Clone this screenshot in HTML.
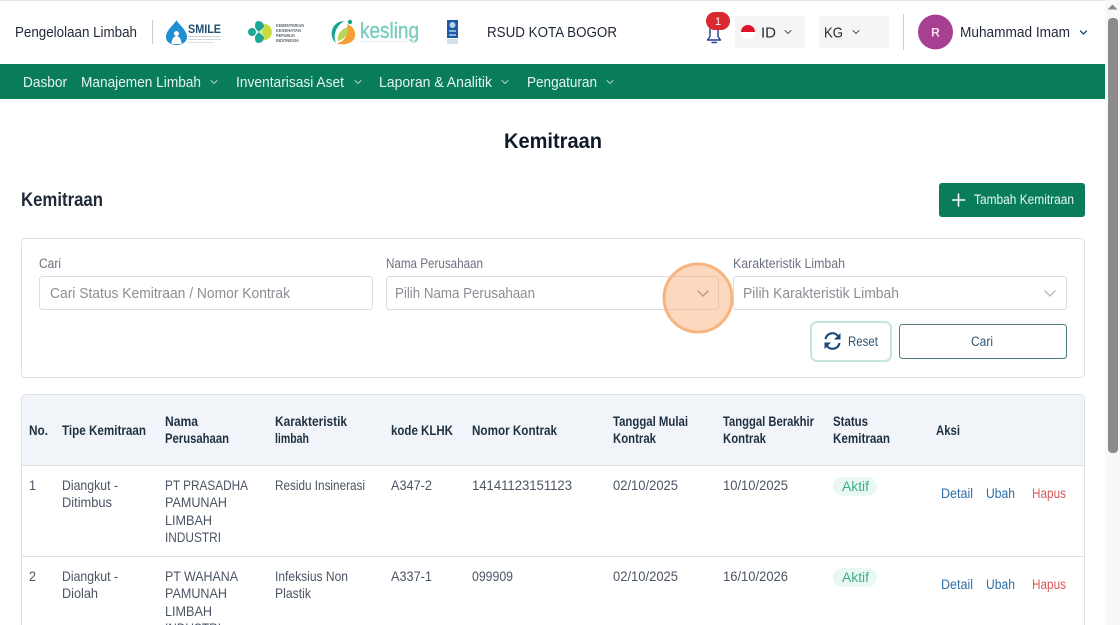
<!DOCTYPE html>
<html lang="id"><head><meta charset="utf-8"><title>Kemitraan</title>
<style>
html,body{margin:0;padding:0;width:1120px;height:625px;overflow:hidden;background:#fff}
svg{display:block}
text{font-family:"Liberation Sans",sans-serif}
.h{font-size:15px;fill:#1f2937}
.n{font-size:15px;fill:#e6f4ef}
.l{font-size:13.5px;fill:#6b7280}
.p{font-size:15px;fill:#8b8f94}
.th{font-size:13.5px;font-weight:bold;fill:#1f3040}
.td{font-size:14px;fill:#4b5563}
.ch{fill:none;stroke-linecap:round;stroke-linejoin:round}
</style></head><body>
<svg width="1120" height="625" viewBox="0 0 1120 625" xmlns="http://www.w3.org/2000/svg">
<rect width="1120" height="625" fill="#fff"/>
<rect width="1105" height="1" fill="#e5e5e5"/>
<!-- scrollbar -->
<rect x="1105" width="15" height="625" fill="#f8f8f8"/>
<path d="M1112.500 4.500l5 5h-10z" fill="#8a8a8a"/>
<rect x="1108" y="18" width="10" height="435" rx="4" fill="#8b8b8b"/>
<!-- header -->
<text class="h" x="15" y="37" textLength="122" lengthAdjust="spacingAndGlyphs">Pengelolaan Limbah</text>
<rect x="152" y="20" width="1" height="24" fill="#ccc"/>
<!-- SMILE -->
<path d="M176.500 20C174 25 166 30 166 37C166 42 171 45 176.500 45C182 45 187 42 187 37C187 30 179 25 176.500 20Z" fill="#1d8fd2"/>
<path d="M176.500 31a2.500 2.500 0 1 1-.01 0zM171.500 44c0-5 2.500-8 5-8s5 3 5 8z" fill="#fff"/>
<text x="188" y="33" font-size="11.500" font-weight="bold" fill="#1f4e72" textLength="33" lengthAdjust="spacingAndGlyphs">SMILE</text>
<rect x="188" y="36" width="32" height="1" fill="#c9d2d8"/><rect x="188" y="39" width="33" height="1" fill="#d2d9de"/><rect x="188" y="42" width="26" height="1" fill="#dbe0e4"/>
<!-- Kemenkes -->
<circle cx="252" cy="32" r="4" fill="#1fa79a"/>
<path d="M258 21c4 0 6 3 6 5s-3 4-5 6c-2-2-4-3-4-6s1-5 3-5z" fill="#1fa79a"/>
<path d="M258 43c4 0 6-3 6-5s-3-4-5-6c-2 2-4 3-4 6s1 5 3 5z" fill="#1fa79a"/>
<path d="M264 24c5 0 8 4 8 8s-3 8-8 8c1-3-2-6-3-8c1-2 4-5 3-8z" fill="#c9dc3c"/>
<g font-size="4.500" font-weight="bold" fill="#5a6570"><text x="276" y="27" textLength="28" lengthAdjust="spacingAndGlyphs">KEMENTERIAN</text><text x="276" y="32" textLength="25" lengthAdjust="spacingAndGlyphs">KESEHATAN</text><text x="276" y="37" textLength="19" lengthAdjust="spacingAndGlyphs">REPUBLIK</text><text x="276" y="42" textLength="23" lengthAdjust="spacingAndGlyphs">INDONESIA</text></g>
<!-- kesling -->
<path d="M344 21A12.500 12.500 0 0 0 336 43C333 36 335 27 344 21Z" fill="#16a394"/>
<path d="M347 24C358 28 358 42 346 44C341 45 338 44 337 43C345 42 349 34 347 24Z" fill="#f4a032"/>
<path d="M338 41C337 34 341 29 348 27C349 34 345 39 338 41Z" fill="#b9d45a"/>
<circle cx="350" cy="22" r="2.200" fill="#16a394"/>
<text x="360" y="38" font-size="22" fill="#7fcdc2" stroke="#7fcdc2" stroke-width=".5" textLength="59" lengthAdjust="spacingAndGlyphs">kesling</text>
<rect x="360" y="41" width="55" height="1" fill="#e2f2ef"/>
<!-- UNDP -->
<rect x="447" y="20" width="11" height="18" fill="#1c5aa6"/>
<circle cx="452.500" cy="25" r="3" fill="#bcd0e8"/>
<rect x="449" y="30" width="7" height="2" fill="#8fb0d8"/><rect x="449" y="34" width="7" height="2" fill="#8fb0d8"/>
<rect x="447" y="39" width="11" height="5" fill="#d5dfe9"/>
<text class="h" x="487" y="37" textLength="130" lengthAdjust="spacingAndGlyphs">RSUD KOTA BOGOR</text>
<!-- bell -->
<path d="M707.500 40l2.500-3.500V28h8v8.500l2.500 3.500zM712 42.500h4.500" fill="none" stroke="#1e3f8f" stroke-width="1.400" stroke-linejoin="round" stroke-linecap="round"/>
<rect x="706" y="12" width="24" height="18" rx="9" fill="#d9292f"/>
<text x="718" y="25" font-size="11" fill="#fff" text-anchor="middle">1</text>
<!-- lang -->
<rect x="735" y="16" width="70" height="32" fill="#f5f5f4"/>
<circle cx="748" cy="32" r="7" fill="#fff"/>
<path d="M741 32a7 7 0 0 1 14 0z" fill="#e0112b"/>
<text class="h" x="761" y="37.500" textLength="15" lengthAdjust="spacingAndGlyphs">ID</text>
<path class="ch" d="M785 30.500l3 3 3-3" stroke="#4b5563" stroke-width="1"/>
<rect x="819" y="16" width="70" height="32" fill="#f5f5f4"/>
<text class="h" x="824" y="37.500" textLength="19" lengthAdjust="spacingAndGlyphs">KG</text>
<path class="ch" d="M853 30.500l3 3 3-3" stroke="#4b5563" stroke-width="1"/>
<rect x="903" y="14" width="1" height="36" fill="#cfcfcf"/>
<circle cx="935.500" cy="32" r="17.500" fill="#a83f92"/>
<text x="935.500" y="36.500" font-size="12" font-weight="bold" fill="#f5dff0" text-anchor="middle">R</text>
<text class="h" x="960" y="37" textLength="110" lengthAdjust="spacingAndGlyphs">Muhammad Imam</text>
<path class="ch" d="M1080.500 31l3 3 3-3" stroke="#1f4a6b" stroke-width="1.300"/>
<!-- nav -->
<rect y="64" width="1105" height="35" fill="#097d5a"/>
<text class="n" x="23" y="87" textLength="44" lengthAdjust="spacingAndGlyphs">Dasbor</text>
<text class="n" x="81" y="87" textLength="120" lengthAdjust="spacingAndGlyphs">Manajemen Limbah</text>
<text class="n" x="236" y="87" textLength="108" lengthAdjust="spacingAndGlyphs">Inventarisasi Aset</text>
<text class="n" x="379" y="87" textLength="113" lengthAdjust="spacingAndGlyphs">Laporan &amp; Analitik</text>
<text class="n" x="527" y="87" textLength="70" lengthAdjust="spacingAndGlyphs">Pengaturan</text>
<g class="ch" stroke="#a9d5c6" stroke-width="1"><path class="ch" d="M211 80.500l3 3 3-3"/><path class="ch" d="M355 80.500l3 3 3-3"/><path class="ch" d="M502 80.500l3 3 3-3"/><path class="ch" d="M607 80.500l3 3 3-3"/></g>
<!-- titles -->
<text x="504" y="148" font-size="21" font-weight="bold" fill="#111827" textLength="98" lengthAdjust="spacingAndGlyphs">Kemitraan</text>
<text x="21" y="206" font-size="19" font-weight="bold" fill="#1f2937" textLength="82" lengthAdjust="spacingAndGlyphs">Kemitraan</text>
<rect x="939" y="183" width="146" height="34" rx="3" fill="#097d5a"/>
<path d="M952.500 200h12M958.500 194v12" stroke="#fff" stroke-width="1.600" stroke-linecap="round"/>
<text x="974" y="204" font-size="13.500" fill="#e8f5f0" textLength="100" lengthAdjust="spacingAndGlyphs">Tambah Kemitraan</text>
<!-- filter card -->
<rect x="21.500" y="238.500" width="1063" height="139" rx="4" fill="#fff" stroke="#dcdfe3"/>
<text class="l" x="39" y="268" textLength="22" lengthAdjust="spacingAndGlyphs">Cari</text>
<text class="l" x="386" y="268" textLength="97" lengthAdjust="spacingAndGlyphs">Nama Perusahaan</text>
<text class="l" x="733" y="268" textLength="112" lengthAdjust="spacingAndGlyphs">Karakteristik Limbah</text>
<rect x="39.500" y="276.500" width="333" height="33" rx="3" fill="#fff" stroke="#d9dce0"/>
<rect x="386.500" y="276.500" width="332" height="33" rx="3" fill="#fff" stroke="#d9dce0"/>
<rect x="733.500" y="276.500" width="333" height="33" rx="3" fill="#fff" stroke="#d9dce0"/>
<text class="p" x="50" y="298" textLength="240" lengthAdjust="spacingAndGlyphs">Cari Status Kemitraan / Nomor Kontrak</text>
<text class="p" x="395" y="298" textLength="140" lengthAdjust="spacingAndGlyphs">Pilih Nama Perusahaan</text>
<text class="p" x="743" y="298" textLength="156" lengthAdjust="spacingAndGlyphs">Pilih Karakteristik Limbah</text>
<path class="ch" d="M698 291l5 5 5-5" stroke="#8f8f8f" stroke-width="1.300"/>
<path class="ch" d="M1045 291l5 5 5-5" stroke="#b5b8bc" stroke-width="1.300"/>
<circle cx="698" cy="298" r="34" fill="#f7a565" fill-opacity=".42" stroke="#f6b580" stroke-width="3"/>
<rect x="811" y="322" width="80" height="39" rx="6" fill="#fff" stroke="#c6e4df" stroke-width="2"/>
<path d="M825.500 339a7 7 0 0 1 12.500-3M839.500 343a7 7 0 0 1-12.500 3" fill="none" stroke="#174a7c" stroke-width="2.200"/>
<path d="M840.500 333v6.500h-6.500zM824.500 349v-6.500h6.500z" fill="#174a7c"/>
<text x="848" y="346" font-size="13.500" fill="#2f5578" textLength="30" lengthAdjust="spacingAndGlyphs">Reset</text>
<rect x="899.500" y="324.500" width="167" height="34" rx="3" fill="#fff" stroke="#4c7f80"/>
<text x="971" y="346" font-size="13.500" fill="#2f5578" textLength="22" lengthAdjust="spacingAndGlyphs">Cari</text>
<!-- table -->
<path d="M21.500 625V399a4.500 4.500 0 0 1 4.500-4.500H1080a4.500 4.500 0 0 1 4.500 4.500V625" fill="#fff" stroke="#dde1e5"/>
<path d="M22 465V399a4 4 0 0 1 4-4H1080a4 4 0 0 1 4 4V465z" fill="#f1f5f9"/>
<rect x="22" y="465" width="1062" height="1" fill="#dde1e5"/>
<rect x="22" y="556" width="1062" height="1" fill="#dde1e5"/>
<text class="th" x="29" y="435" textLength="19" lengthAdjust="spacingAndGlyphs">No.</text>
<text class="th" x="62" y="435" textLength="84" lengthAdjust="spacingAndGlyphs">Tipe Kemitraan</text>
<text class="th" x="165" y="426" textLength="33" lengthAdjust="spacingAndGlyphs">Nama</text>
<text class="th" x="165" y="443" textLength="64" lengthAdjust="spacingAndGlyphs">Perusahaan</text>
<text class="th" x="275" y="426" textLength="72" lengthAdjust="spacingAndGlyphs">Karakteristik</text>
<text class="th" x="275" y="443" textLength="34" lengthAdjust="spacingAndGlyphs">limbah</text>
<text class="th" x="391" y="435" textLength="62" lengthAdjust="spacingAndGlyphs">kode KLHK</text>
<text class="th" x="472" y="435" textLength="85" lengthAdjust="spacingAndGlyphs">Nomor Kontrak</text>
<text class="th" x="613" y="426" textLength="75" lengthAdjust="spacingAndGlyphs">Tanggal Mulai</text>
<text class="th" x="613" y="443" textLength="43" lengthAdjust="spacingAndGlyphs">Kontrak</text>
<text class="th" x="723" y="426" textLength="91" lengthAdjust="spacingAndGlyphs">Tanggal Berakhir</text>
<text class="th" x="723" y="443" textLength="43" lengthAdjust="spacingAndGlyphs">Kontrak</text>
<text class="th" x="833" y="426" textLength="35" lengthAdjust="spacingAndGlyphs">Status</text>
<text class="th" x="833" y="443" textLength="57" lengthAdjust="spacingAndGlyphs">Kemitraan</text>
<text class="th" x="936" y="435" textLength="24" lengthAdjust="spacingAndGlyphs">Aksi</text>
<!-- row 1 -->
<text class="td" x="29" y="490" textLength="7" lengthAdjust="spacingAndGlyphs">1</text>
<text class="td" x="62" y="490" textLength="56" lengthAdjust="spacingAndGlyphs">Diangkut -</text>
<text class="td" x="62" y="507" textLength="50" lengthAdjust="spacingAndGlyphs">Ditimbus</text>
<text class="td" x="165" y="490" textLength="83" lengthAdjust="spacingAndGlyphs">PT PRASADHA</text>
<text class="td" x="165" y="507" textLength="62" lengthAdjust="spacingAndGlyphs">PAMUNAH</text>
<text class="td" x="165" y="525" textLength="47" lengthAdjust="spacingAndGlyphs">LIMBAH</text>
<text class="td" x="165" y="542" textLength="56" lengthAdjust="spacingAndGlyphs">INDUSTRI</text>
<text class="td" x="275" y="490" textLength="90" lengthAdjust="spacingAndGlyphs">Residu Insinerasi</text>
<text class="td" x="391" y="490" textLength="41" lengthAdjust="spacingAndGlyphs">A347-2</text>
<text class="td" x="472" y="490" textLength="100" lengthAdjust="spacingAndGlyphs">14141123151123</text>
<text class="td" x="613" y="490" textLength="65" lengthAdjust="spacingAndGlyphs">02/10/2025</text>
<text class="td" x="723" y="490" textLength="65" lengthAdjust="spacingAndGlyphs">10/10/2025</text>
<rect x="833" y="477" width="44" height="19" rx="9.500" fill="#e9f8f2"/>
<text x="842" y="491" font-size="14" fill="#3fae86" textLength="27" lengthAdjust="spacingAndGlyphs">Aktif</text>
<text x="941" y="498" font-size="13.500" fill="#2f6fa6" textLength="32" lengthAdjust="spacingAndGlyphs">Detail</text>
<text x="986" y="498" font-size="13.500" fill="#2f6fa6" textLength="29" lengthAdjust="spacingAndGlyphs">Ubah</text>
<text x="1032" y="498" font-size="13.500" fill="#d9585a" textLength="34" lengthAdjust="spacingAndGlyphs">Hapus</text>
<!-- row 2 -->
<text class="td" x="29" y="581" textLength="7" lengthAdjust="spacingAndGlyphs">2</text>
<text class="td" x="62" y="581" textLength="56" lengthAdjust="spacingAndGlyphs">Diangkut -</text>
<text class="td" x="62" y="598" textLength="36" lengthAdjust="spacingAndGlyphs">Diolah</text>
<text class="td" x="165" y="581" textLength="73" lengthAdjust="spacingAndGlyphs">PT WAHANA</text>
<text class="td" x="165" y="598" textLength="62" lengthAdjust="spacingAndGlyphs">PAMUNAH</text>
<text class="td" x="165" y="616" textLength="47" lengthAdjust="spacingAndGlyphs">LIMBAH</text>
<text class="td" x="165" y="633" textLength="56" lengthAdjust="spacingAndGlyphs">INDUSTRI</text>
<text class="td" x="275" y="581" textLength="73" lengthAdjust="spacingAndGlyphs">Infeksius Non</text>
<text class="td" x="275" y="598" textLength="36" lengthAdjust="spacingAndGlyphs">Plastik</text>
<text class="td" x="391" y="581" textLength="41" lengthAdjust="spacingAndGlyphs">A337-1</text>
<text class="td" x="472" y="581" textLength="41" lengthAdjust="spacingAndGlyphs">099909</text>
<text class="td" x="613" y="581" textLength="65" lengthAdjust="spacingAndGlyphs">02/10/2025</text>
<text class="td" x="723" y="581" textLength="65" lengthAdjust="spacingAndGlyphs">16/10/2026</text>
<rect x="833" y="568" width="44" height="19" rx="9.500" fill="#e9f8f2"/>
<text x="842" y="582" font-size="14" fill="#3fae86" textLength="27" lengthAdjust="spacingAndGlyphs">Aktif</text>
<text x="941" y="589" font-size="13.500" fill="#2f6fa6" textLength="32" lengthAdjust="spacingAndGlyphs">Detail</text>
<text x="986" y="589" font-size="13.500" fill="#2f6fa6" textLength="29" lengthAdjust="spacingAndGlyphs">Ubah</text>
<text x="1032" y="589" font-size="13.500" fill="#d9585a" textLength="34" lengthAdjust="spacingAndGlyphs">Hapus</text>
</svg>
</body></html>
